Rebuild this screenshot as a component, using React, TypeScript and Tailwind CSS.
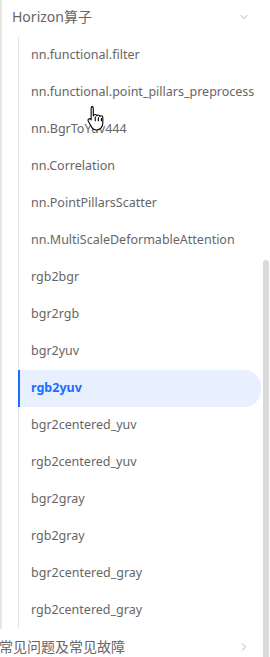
import { ChevronDown, ChevronRight } from 'lucide-react';

const items = [
  'nn.functional.filter',
  'nn.functional.point_pillars_preprocess',
  'nn.BgrToYuv444',
  'nn.Correlation',
  'nn.PointPillarsScatter',
  'nn.MultiScaleDeformableAttention',
  'rgb2bgr',
  'bgr2rgb',
  'bgr2yuv',
  'rgb2yuv',
  'bgr2centered_yuv',
  'rgb2centered_yuv',
  'bgr2gray',
  'rgb2gray',
  'bgr2centered_gray',
  'rgb2centered_gray',
];

const active = 'rgb2yuv';

function HandCursor() {
  return (
    <svg width="20" height="26" viewBox="0 0 18 24" className="absolute left-[86px] top-[105px]">
      <path
        d="M5 1.5c.9 0 1.5.6 1.5 1.5v7l.3-.1c.2-.8.8-1.2 1.5-1.2s1.3.5 1.4 1.3c.3-.5.8-.8 1.4-.8.7 0 1.3.5 1.4 1.3.3-.4.8-.6 1.3-.6.9 0 1.5.7 1.5 1.6v5.2c0 3.5-2.4 6.3-5.6 6.3H9.2c-1.9 0-3.2-.9-4.3-2.6L1.8 14.8c-.4-.7-.2-1.5.5-1.9.6-.4 1.4-.2 1.8.3l.4.6V3c0-.9.6-1.5 1.5-1.5z"
        fill="#fff"
        stroke="#000"
        strokeWidth="1"
        strokeLinejoin="round"
      />
      <path d="M8.3 10.5v4.5M11.2 11.3v3.7M14 12v3" stroke="#000" strokeWidth="1" />
    </svg>
  );
}

export default function App() {
  return (
    <div
      className="relative w-[270px] h-[657px] overflow-hidden bg-white text-[#666666]"
      style={{ fontFamily: '"Noto Sans", "Noto Sans CJK SC", sans-serif' }}
    >
      <div className="border-l-[2px] border-[#e6e6e6]">
        {/* group header */}
        <div className="flex items-center justify-between h-[33px] pl-[10px] pr-[20px]">
          <span className="text-[14px]">Horizon算子</span>
          <ChevronDown className="w-[12px] h-[12px] text-[#999999]" strokeWidth={1.5} />
        </div>

        <div className="ml-[16px] mt-[4px] border-l border-[#e6e6e6]">
          {items.map((label) => {
            const isActive = label === active;
            return (
              <div
                key={label}
                className={
                  isActive
                    ? 'flex items-center h-[37px] pl-[11px] mr-[9px] -ml-px border-l-2 border-[#1a6dff] bg-[#e8efff] rounded-r-[17px] text-[#1a6dff] font-bold text-[12.5px] whitespace-nowrap'
                    : 'flex items-center h-[37px] pl-[12px] text-[12.5px] whitespace-nowrap'
                }
              >
                {label}
              </div>
            );
          })}
        </div>
      </div>

      {/* next section */}
      <div className="flex items-center justify-between h-[35px] -ml-px pr-[20px]">
        <span className="text-[14px]">常见问题及常见故障</span>
        <ChevronRight className="w-[12px] h-[12px] text-[#999999]" strokeWidth={1.5} />
      </div>

      {/* scrollbar */}
      <div className="absolute right-[1px] top-[260px] w-[6px] h-[420px] rounded-t-[3px] bg-[#dadada]" />

      <HandCursor />
    </div>
  );
}
